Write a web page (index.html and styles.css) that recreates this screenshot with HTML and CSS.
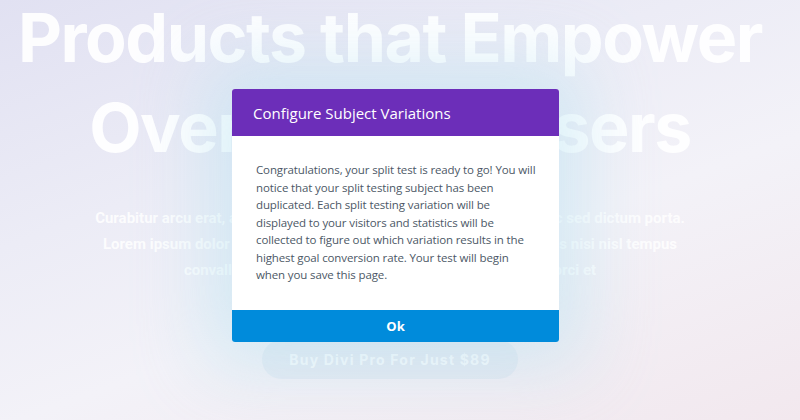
FILE: index.html
```html
<!DOCTYPE html>
<html lang="en">
<head>
    <meta charset="UTF-8">
    <meta name="viewport" content="width=device-width, initial-scale=1.0">
    <title>Divi Pro</title>
    <link rel="stylesheet" href="styles.css">
</head>
<body>
    <div class="hero">
        <h1>Products that Empower<br>Over 70,000 Users</h1>
        <p class="lead">
            Curabitur arcu erat, accumsan id imperdiet et, porttitor at sem. Donec sed dictum porta.<br>
            Lorem ipsum dolor sit amet, consectetur adipiscing elit. Cras ultrices nisi nisl tempus<br>
            convallis quis ac lectus. Vestibulum ante ipsum primis orci et
        </p>
        <a class="buy" href="#">Buy Divi Pro For Just $89</a>
    </div>

    <div class="modal">
        <div class="modal-head">Configure Subject Variations</div>
        <div class="modal-body">
            Congratulations, your split test is ready to go! You will notice that your split testing subject has been duplicated. Each split testing variation will be displayed to your visitors and statistics will be collected to figure out which variation results in the highest goal conversion rate. Your test will begin when you save this page.
        </div>
        <button class="modal-ok">Ok</button>
    </div>
</body>
</html>
```

FILE: styles.css
```css
html, body {
    height: 100%;
}
body {
    margin: 0;
    overflow: hidden;
    font-family: "Open Sans", sans-serif;
    background: linear-gradient(160deg, #e1e1f2 0%, #ececf6 35%, #f3f2f8 60%, #f2e8ee 100%);
}
.hero {
    text-align: center;
    padding: 0 20px 0 0;
    color: rgba(255, 255, 255, 0.92);
}
.hero h1 {
    margin: -8px 0 0;
    white-space: nowrap;
    font-family: Inter, sans-serif;
    font-weight: 700;
    font-size: 68px;
    line-height: 90px;
    letter-spacing: -1.5px;
}
.lead {
    margin: 33px 0 0;
    white-space: nowrap;
    font-family: Roboto, sans-serif;
    font-weight: 700;
    font-size: 15px;
    line-height: 26px;
    color: rgba(255, 255, 255, 0.85);
}
.buy {
    display: inline-block;
    margin-top: 57px;
    padding: 10px 27px;
    border-radius: 20px;
    background: rgba(205, 222, 235, 0.35);
    color: rgba(255, 255, 255, 0.8);
    font-family: Inter, sans-serif;
    font-weight: 700;
    font-size: 14px;
    line-height: 19px;
    letter-spacing: 1.2px;
    text-decoration: none;
}
.modal {
    position: absolute;
    top: 89px;
    left: 232px;
    width: 327px;
    border-radius: 3px;
    overflow: hidden;
    background: #fff;
    box-shadow: 0 0 70px 25px rgba(175, 225, 240, 0.45);
}
.modal-head {
    height: 47px;
    padding: 0 21px;
    display: flex;
    align-items: center;
    background: #6c2eb9;
    color: #fff;
    font-size: 15px;
}
.modal-body {
    padding: 25px 22px 26px 24px;
    color: #4c5866;
    font-size: 11.5px;
    line-height: 17.5px;
    letter-spacing: -0.12px;
}
.modal-ok {
    display: block;
    width: 100%;
    height: 32px;
    border: none;
    background: #008bdb;
    color: #fff;
    font-family: "Open Sans", sans-serif;
    font-weight: 700;
    font-size: 13px;
    cursor: pointer;
}
```
